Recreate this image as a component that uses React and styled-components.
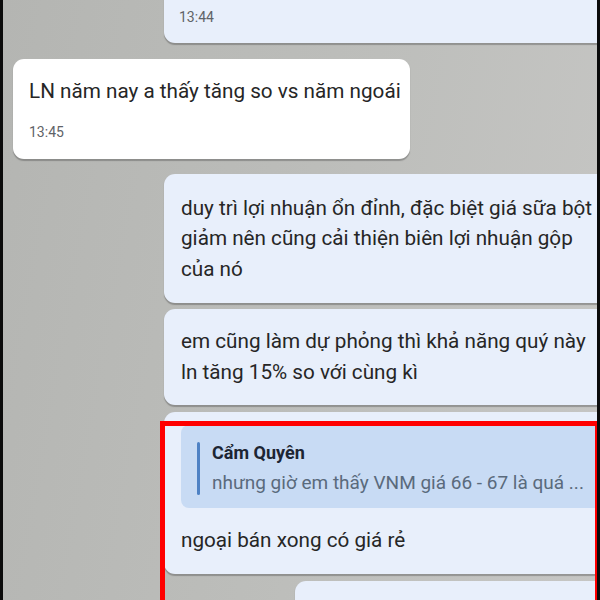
import React from "react";
import styled, { createGlobalStyle } from "styled-components";

const GlobalStyle = createGlobalStyle`
  html, body {
    margin: 0;
    padding: 0;
    background: #000;
  }
  body {
    font-family: Roboto, "Noto Sans", "Liberation Sans", sans-serif;
  }
`;

const Frame = styled.div`
  width: 600px;
  height: 600px;
  display: flex;
  background: #0b0b0b;
  overflow: hidden;
`;

const Chat = styled.div`
  position: relative;
  flex: 1;
  margin: 0 3px 0 3px;
  overflow: hidden;
  background: linear-gradient(100deg, #b4b5b2 0%, #bdbebb 55%, #c6c6c4 100%);
`;

const List = styled.div`
  display: flex;
  flex-direction: column;
  margin-top: -15px;
  padding-left: 10px;
`;

const Bubble = styled.div`
  box-sizing: border-box;
  align-self: ${(p) => (p.$mine ? "flex-end" : "flex-start")};
  width: ${(p) => p.$width}px;
  margin-right: ${(p) => (p.$mine ? "-14px" : "0")};
  margin-top: ${(p) => p.$gap || 0}px;
  padding: ${(p) => p.$pad || "17px 16px 18px 16px"};
  border-radius: 11px;
  background: ${(p) => (p.$mine ? "#e8effb" : "#ffffff")};
  box-shadow: 0 1.5px 1px rgba(60, 60, 60, 0.35);
  color: #262626;
  font-size: 20.7px;
  line-height: 30.5px;
`;

const Text = styled.div`
  white-space: nowrap;
`;

const Time = styled.div`
  margin-top: ${(p) => p.$top ?? 16}px;
  font-size: 14px;
  line-height: 18px;
  color: #5f6368;
`;

const Quote = styled.div`
  display: flex;
  gap: 12px;
  margin-bottom: 17px;
  padding: 17px 12px 13px 16px;
  border-radius: 8px;
  background: #c8dbf4;
`;

const QuoteBar = styled.div`
  width: 3px;
  flex-shrink: 0;
  border-radius: 2px;
  background: #4f82c4;
`;

const QuoteBody = styled.div`
  display: flex;
  flex-direction: column;
  min-width: 0;
`;

const QuoteName = styled.div`
  font-size: 18px;
  font-weight: 700;
  line-height: 22px;
  color: #1c2533;
`;

const QuotePreview = styled.div`
  margin-top: 7px;
  font-size: 19px;
  line-height: 24px;
  color: #5a6a7c;
  white-space: nowrap;
`;

const Highlight = styled.div`
  position: absolute;
  left: 157px;
  top: 421px;
  width: 440px;
  height: 200px;
  box-sizing: border-box;
  border: 5px solid #ff0000;
  pointer-events: none;
`;

export default function App() {
  return (
    <>
      <GlobalStyle />
      <Frame>
        <Chat>
          <List>
            <Bubble $mine $width={447} $pad="23px 16px 17px 15px">
              <Time $top={0}>13:44</Time>
            </Bubble>
            <Bubble $width={397} $gap={16}>
              <Text>LN năm nay a thấy tăng so vs năm ngoái</Text>
              <Time>13:45</Time>
            </Bubble>
            <Bubble $mine $width={447} $gap={15} $pad="19px 16px 19px 17px">
              <Text>duy trì lợi nhuận ổn đỉnh, đặc biệt giá sữa bột</Text>
              <Text>giảm nên cũng cải thiện biên lợi nhuận gộp</Text>
              <Text>của nó</Text>
            </Bubble>
            <Bubble $mine $width={447} $gap={6} $pad="17px 16px 18px 17px">
              <Text>em cũng làm dự phỏng thì khả năng quý này</Text>
              <Text>ln tăng 15% so với cùng kì</Text>
            </Bubble>
            <Bubble $mine $width={447} $gap={7} $pad="13px 0 18px 17px">
              <Quote>
                <QuoteBar />
                <QuoteBody>
                  <QuoteName>Cẩm Quyên</QuoteName>
                  <QuotePreview>nhưng giờ em thấy VNM giá 66 - 67 là quá ...</QuotePreview>
                </QuoteBody>
              </Quote>
              <Text>ngoại bán xong có giá rẻ</Text>
            </Bubble>
            <Bubble $mine $width={316} $gap={7} $pad="40px 16px">
              <Text>&nbsp;</Text>
            </Bubble>
          </List>
          <Highlight />
        </Chat>
      </Frame>
    </>
  );
}
